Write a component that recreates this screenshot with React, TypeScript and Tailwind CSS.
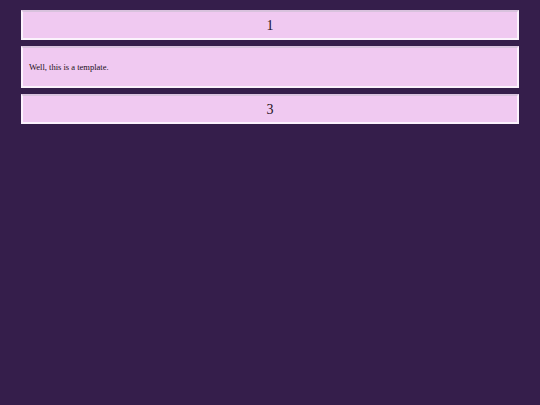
export default function App() {
  return (
    <div className="min-h-screen bg-[#351e4b] px-[21px] pt-[10px] font-['Liberation_Serif',serif] text-[#1c1020]">
      <div className="flex flex-col gap-[6px]">
        <div className="flex h-[30px] items-center justify-center border-2 border-[#fbf2fc] border-t-[#d8c2dd] bg-[#f0c9f1] text-[14px]">
          1
        </div>
        <div className="flex h-[42px] items-center border-2 border-[#fbf2fc] border-t-[#d8c2dd] bg-[#f0c9f1] px-[6px] pt-[1px] text-[8.5px]">
          Well, this is a template.
        </div>
        <div className="flex h-[30px] items-center justify-center border-2 border-[#fbf2fc] border-t-[#d8c2dd] bg-[#f0c9f1] text-[14px]">
          3
        </div>
      </div>
    </div>
  );
}
